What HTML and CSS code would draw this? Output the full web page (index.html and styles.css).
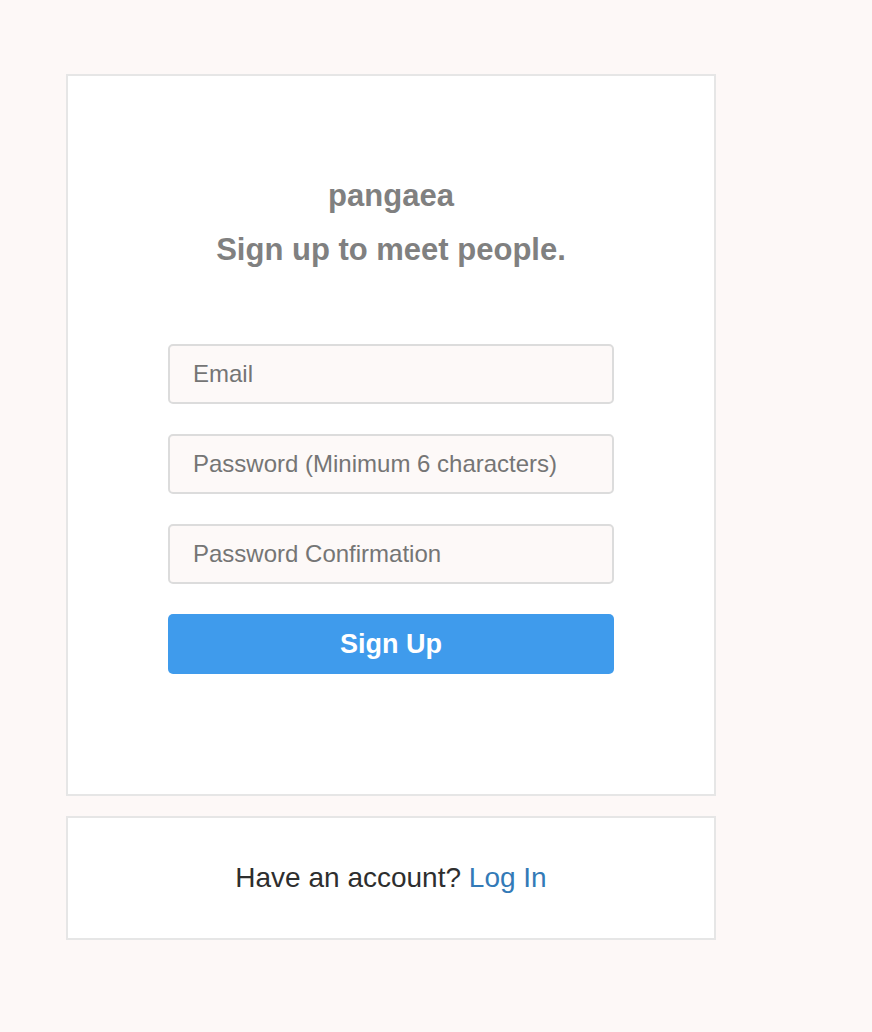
FILE: index.html
```html
<!DOCTYPE html>
<html>
<head>
<meta charset="utf-8">
<link rel="stylesheet" href="styles.css">
</head>
<body>
<div class="page">
  <div class="card signup">
    <h1 class="brand">pangaea</h1>
    <h2 class="tagline">Sign up to meet people.</h2>
    <form class="form">
      <input class="field" type="email" placeholder="Email">
      <input class="field" type="password" placeholder="Password (Minimum 6 characters)">
      <input class="field" type="password" placeholder="Password Confirmation">
      <button class="btn" type="button">Sign Up</button>
    </form>
  </div>
  <div class="card login">
    <p class="login-text">Have an account? <a href="#" class="link">Log In</a></p>
  </div>
</div>
</body>
</html>
```
FILE: styles.css
```css
html, body {
  margin: 0;
  padding: 0;
  background: #fdf8f7;
  font-family: "Liberation Sans", Arial, sans-serif;
}
.page {
  width: 650px;
  padding: 74px 0 0 66px;
  display: flex;
  flex-direction: column;
  gap: 20px;
}
.card {
  background: #fff;
  border: 2px solid #e6e6e6;
  box-sizing: border-box;
}
.signup {
  height: 722px;
  display: flex;
  flex-direction: column;
  align-items: center;
  padding-top: 100px;
}
.brand {
  margin: 0;
  font-size: 31px;
  font-weight: bold;
  color: #808080;
  line-height: 40px;
}
.tagline {
  margin: 14px 0 0;
  font-size: 31px;
  font-weight: bold;
  color: #808080;
  line-height: 40px;
}
.form {
  margin-top: 74px;
  width: 446px;
  display: flex;
  flex-direction: column;
  gap: 30px;
}
.field {
  height: 60px;
  box-sizing: border-box;
  border: 2px solid #dcdcdc;
  border-radius: 5px;
  background: #fdf9f8;
  padding: 0 23px;
  font-family: "Liberation Sans", Arial, sans-serif;
  font-size: 24px;
  color: #333;
  outline: none;
}
.field::placeholder {
  color: #757575;
}
.btn {
  height: 60px;
  border: none;
  border-radius: 5px;
  background: #3f9bec;
  color: #fff;
  font-family: "Liberation Sans", Arial, sans-serif;
  font-size: 27px;
  font-weight: bold;
  cursor: pointer;
}
.login {
  height: 124px;
  display: flex;
  align-items: center;
  justify-content: center;
}
.login-text {
  margin: 0;
  font-size: 28px;
  color: #2e2e2e;
}
.link {
  color: #337ab7;
  text-decoration: none;
}
```
